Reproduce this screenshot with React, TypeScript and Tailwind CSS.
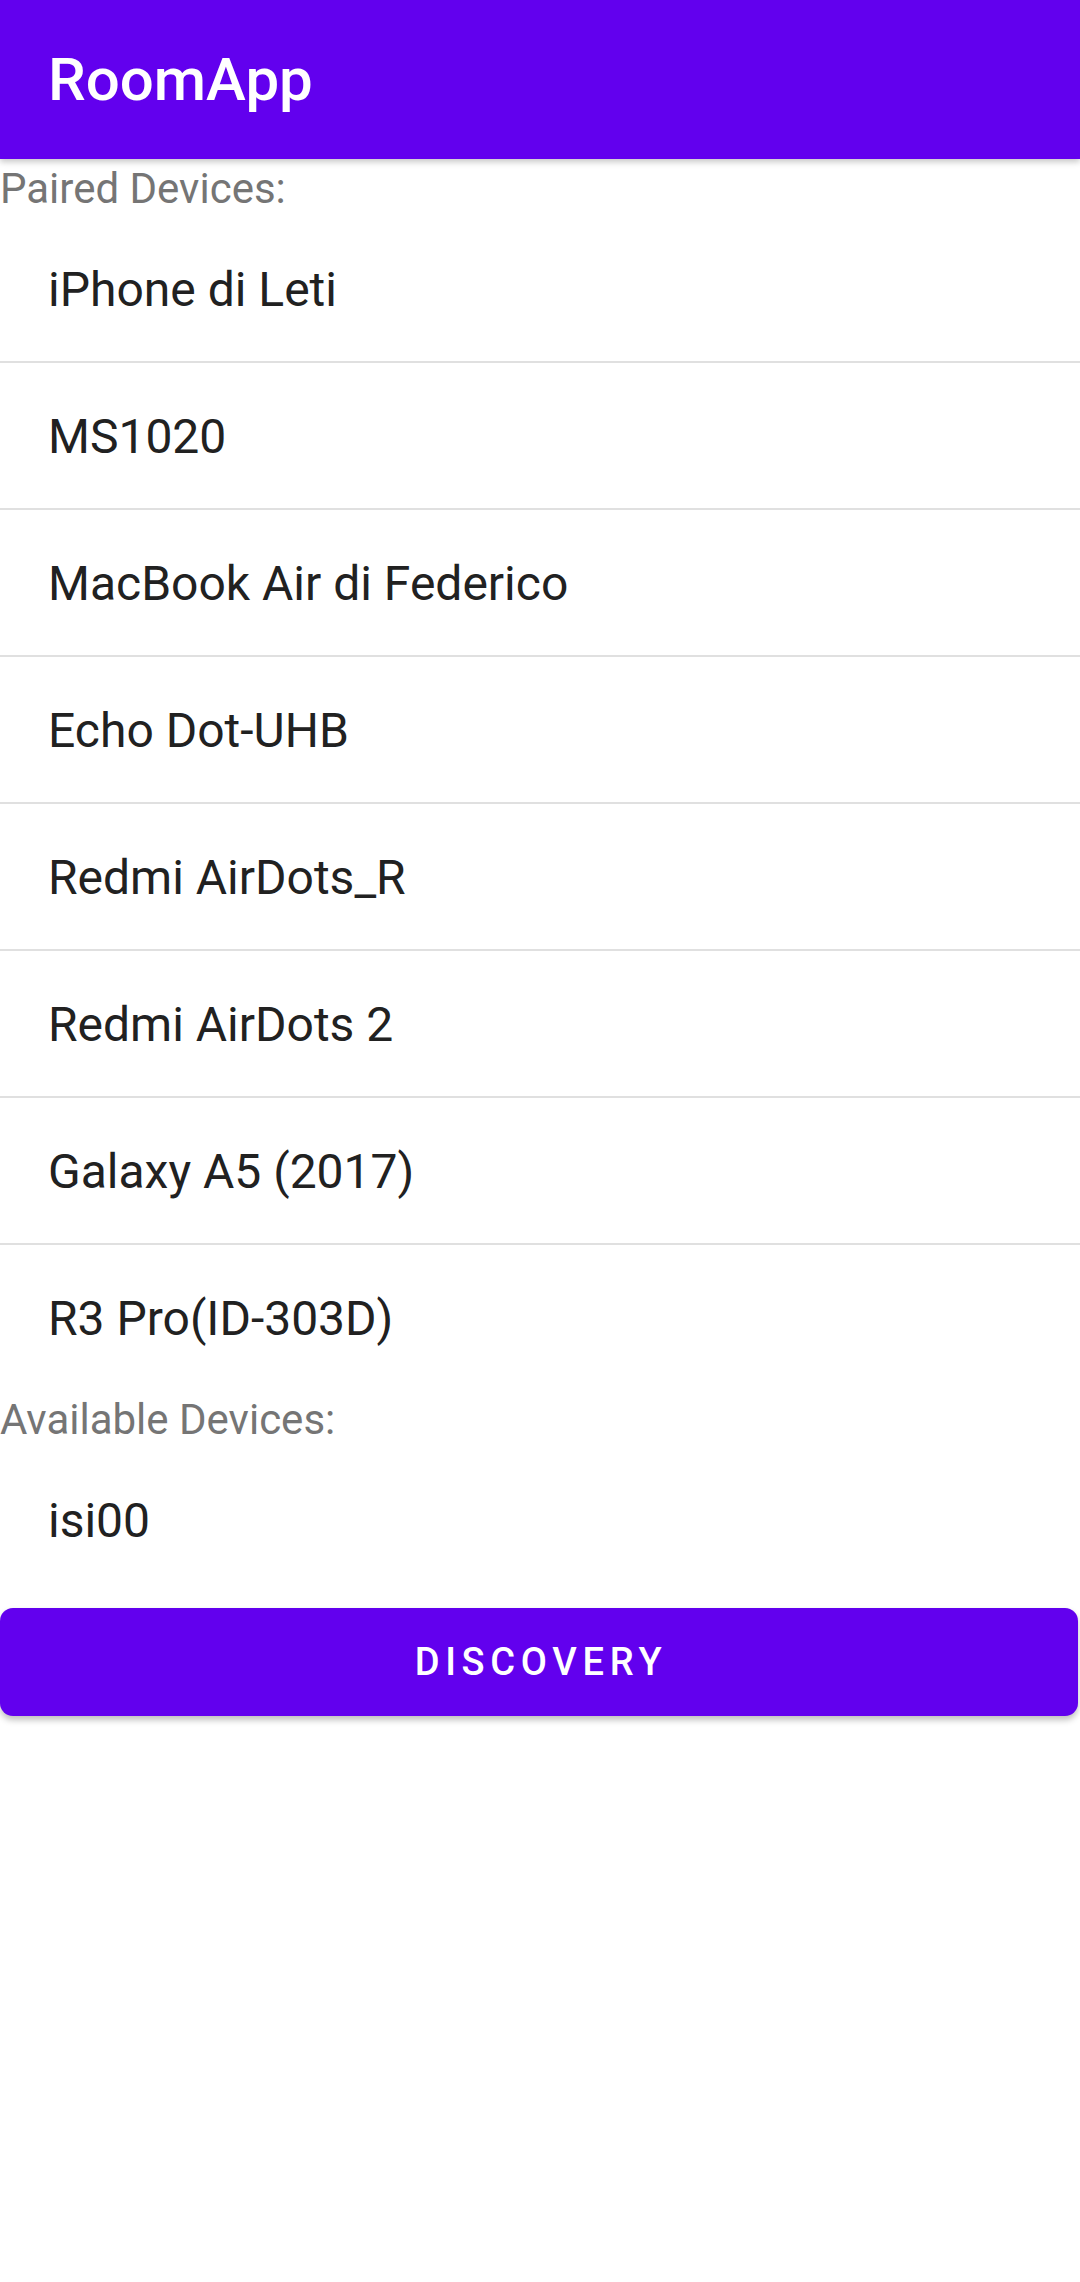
import React from 'react';

const paired = [
  'iPhone di Leti',
  'MS1020',
  'MacBook Air di Federico',
  'Echo Dot-UHB',
  'Redmi AirDots_R',
  'Redmi AirDots 2',
  'Galaxy A5 (2017)',
  'R3 Pro(ID-303D)',
];

const available = ['isi00'];

function SectionLabel({ text }: { text: string }) {
  return (
    <div className="h-[57px] pt-[9px] text-[42px] leading-none text-[#757575]">{text}</div>
  );
}

function DeviceRow({ name, divider }: { name: string; divider: boolean }) {
  return (
    <>
      <div className="flex h-[145px] items-center pl-[48px] pt-[3px] text-[48px] leading-none text-[#212121]">
        {name}
      </div>
      {divider && <div className="h-[2px] bg-[#e0e0e0]" />}
    </>
  );
}

export default function App() {
  return (
    <div className="min-h-[2282px] w-[1080px] bg-white font-['Roboto',_'Noto_Sans',_sans-serif]">
      {/* toolbar */}
      <div className="relative z-10 flex h-[159px] items-center bg-[#6200ee] pl-[48px] shadow-[0_3px_6px_rgba(0,0,0,0.22)]">
        <span className="text-[60px] font-medium leading-none text-white">RoomApp</span>
      </div>

      <SectionLabel text="Paired Devices:" />
      {paired.map((d, i) => (
        <DeviceRow key={d} name={d} divider={i < paired.length - 1} />
      ))}

      <SectionLabel text="Available Devices:" />
      {available.map((d) => (
        <DeviceRow key={d} name={d} divider={false} />
      ))}

      <div className="pt-[16px] pr-[2px]">
        <button className="flex h-[108px] w-full items-center justify-center rounded-[13px] bg-[#6200ee] pl-[4px] text-[38px] font-medium uppercase leading-none tracking-[0.15em] text-white shadow-[0_4px_6px_rgba(0,0,0,0.25)]">
          Discovery
        </button>
      </div>
    </div>
  );
}
